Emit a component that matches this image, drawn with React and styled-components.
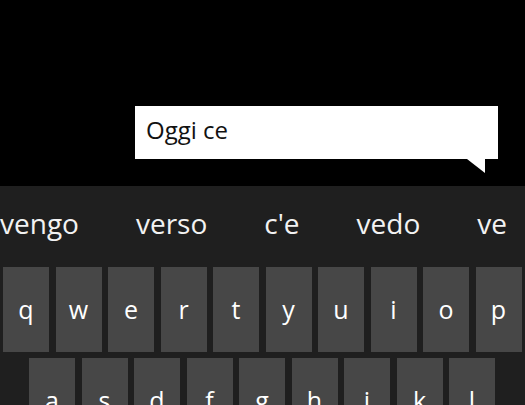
import React from 'react'
import styled, { createGlobalStyle } from 'styled-components'

const suggestions = ['vengo', 'verso', "c'e", 'vedo', 've']
const topRow = ['q', 'w', 'e', 'r', 't', 'y', 'u', 'i', 'o', 'p']
const homeRow = ['a', 's', 'd', 'f', 'g', 'h', 'j', 'k', 'l']

function App() {
  return (
    <>
      <GlobalStyle />
      <Screen>
        <Compose>
          <Bubble>Oggi ce</Bubble>
        </Compose>
        <Keyboard>
          <SuggestionBar>
            {suggestions.map(word => (
              <Suggestion key={word}>{word}</Suggestion>
            ))}
          </SuggestionBar>
          <KeyRow $inset={3}>
            {topRow.map(k => (
              <Key key={k}>{k}</Key>
            ))}
          </KeyRow>
          <KeyRow $inset={29}>
            {homeRow.map(k => (
              <Key key={k}>{k}</Key>
            ))}
          </KeyRow>
        </Keyboard>
      </Screen>
    </>
  )
}

export default App

const GlobalStyle = createGlobalStyle`
  html, body {
    margin: 0;
    padding: 0;
    background: #000;
    overflow: hidden;
  }
  body {
    font-family: "Open Sans", "Noto Sans", sans-serif;
  }
`

const Screen = styled.div`
  width: 525px;
  height: 405px;
  display: flex;
  flex-direction: column;
  background: #000;
  overflow: hidden;
`

const Compose = styled.div`
  flex: none;
  height: 186px;
  padding: 106px 0 0 135px;
  box-sizing: border-box;
`

const Bubble = styled.div`
  position: relative;
  width: 363px;
  height: 53px;
  box-sizing: border-box;
  padding-left: 11px;
  background: #fff;
  color: #111;
  font-size: 24px;
  line-height: 47px;

  &::after {
    content: '';
    position: absolute;
    right: 13px;
    top: 53px;
    width: 0;
    height: 0;
    border-top: 14px solid #fff;
    border-left: 18px solid transparent;
  }
`

const Keyboard = styled.div`
  flex: none;
  background: #1f1f1f;
  display: flex;
  flex-direction: column;
  gap: 6px;
`

const SuggestionBar = styled.div`
  height: 75px;
  display: flex;
  align-items: center;
  gap: 57px;
  white-space: nowrap;
`

const Suggestion = styled.div`
  color: #f2f2f2;
  font-size: 28px;
  line-height: 75px;
  flex: none;
`

const KeyRow = styled.div`
  display: flex;
  gap: 6.5px;
  padding-left: ${p => p.$inset}px;
`

const Key = styled.div`
  flex: 0 0 46px;
  height: 85px;
  background: #474747;
  color: #fff;
  font-size: 25px;
  line-height: 85px;
  text-align: center;
`
